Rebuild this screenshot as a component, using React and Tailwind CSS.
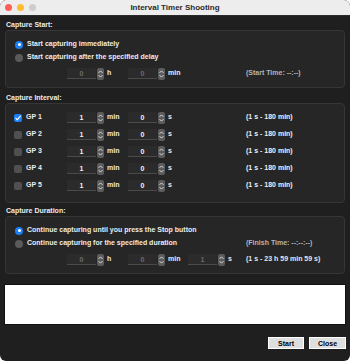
import React from 'react';

/* ── small controls ─────────────────────────────────────── */
const Stepper = () => (
  <svg width="7" height="12" viewBox="0 0 7 12" className="shrink-0">
    <rect x="0" y="0" width="7" height="12" rx="2" fill="#5c5c5c" />
    <path d="M1.8 4.6 L3.5 2.9 L5.2 4.6" fill="none" stroke="#e8e8e8" strokeWidth="0.9" strokeLinecap="round" strokeLinejoin="round" />
    <path d="M1.8 7.4 L3.5 9.1 L5.2 7.4" fill="none" stroke="#e8e8e8" strokeWidth="0.9" strokeLinecap="round" strokeLinejoin="round" />
  </svg>
);

const Radio = ({ on }) =>
  on ? (
    <span className="w-[8px] h-[8px] rounded-full bg-[#1b7ff5] flex items-center justify-center shrink-0">
      <span className="w-[3px] h-[3px] rounded-full bg-white" />
    </span>
  ) : (
    <span className="w-[8px] h-[8px] rounded-full bg-[#5a5a5a] shrink-0" />
  );

const Check = ({ on }) =>
  on ? (
    <span className="w-[8px] h-[8px] rounded-[2px] bg-[#1b7ff5] flex items-center justify-center shrink-0">
      <svg width="8" height="8" viewBox="0 0 8 8">
        <path d="M1.8 4.2 L3.3 5.8 L6.3 2.2" fill="none" stroke="white" strokeWidth="1.2" strokeLinecap="round" strokeLinejoin="round" />
      </svg>
    </span>
  ) : (
    <span className="w-[8px] h-[8px] rounded-[2px] bg-[#505050] shrink-0" />
  );

const NumField = ({ value, unit, disabled, w }) => (
  <div className={`flex items-center shrink-0 ${w}`}>
    <div
      className={`w-[29px] h-[11px] bg-[#2b2b2b] border-b border-[#4a4a4a] flex items-center justify-center leading-none ${
        disabled ? 'text-[#6b6b6b]' : 'text-[#f2f2f2]'
      }`}
    >
      {value}
    </div>
    <span className="ml-[1px]">
      <Stepper />
    </span>
    <span className="ml-[3px] text-[#ececec]">{unit}</span>
  </div>
);

const Label = ({ children, className = '' }) => (
  <div className={`h-[10px] leading-[10px] pl-[6px] text-[#ededed] ${className}`}>{children}</div>
);

const Box = ({ children, className = '' }) => (
  <div className={`mx-[5px] bg-[#262626] border border-[#363636] rounded-[4px] ${className}`}>{children}</div>
);

const intervals = ['GP 1', 'GP 2', 'GP 3', 'GP 4', 'GP 5'];

export default function App() {
  return (
    <div className="w-[350px] h-[362px] bg-white" style={{ fontFamily: '"Liberation Sans", Arial, sans-serif' }}>
      <div className="w-[350px] h-[361px] rounded-[6px] overflow-hidden bg-[#1f1f1f] flex flex-col text-[7px] font-bold">
        {/* ── Title bar ─────────────────────────────────── */}
        <div className="h-[16px] shrink-0 bg-[#ededed] border-b border-[#2a2a2a] flex items-center relative">
          <div className="flex items-center gap-[5px] pl-[5px]">
            <span className="w-[7px] h-[7px] rounded-full bg-[#fe5f57]" />
            <span className="w-[7px] h-[7px] rounded-full bg-[#febc2e]" />
            <span className="w-[7px] h-[7px] rounded-full bg-[#cdcdcd]" />
          </div>
          <div className="absolute inset-0 flex items-center justify-center text-[8px] font-bold text-[#2b2b2b]">
            Interval Timer Shooting
          </div>
        </div>

        {/* ── Capture Start ─────────────────────────────── */}
        <Label className="mt-[4px]">Capture Start:</Label>
        <Box className="pt-[7px] pb-[6px]">
          <div className="h-[13px] flex items-center pl-[9px] gap-[4px] text-[#ececec]">
            <Radio on />
            <span>Start capturing immediately</span>
          </div>
          <div className="h-[13px] flex items-center pl-[9px] gap-[4px] text-[#ececec]">
            <Radio />
            <span>Start capturing after the specified delay</span>
          </div>
          <div className="h-[15px] mt-[2px] flex items-center pl-[61px]">
            <NumField value="0" unit="h" disabled w="w-[61px]" />
            <NumField value="0" unit="min" disabled w="w-[118px]" />
            <span className="text-[#b5b5b5]">(Start Time: --:--)</span>
          </div>
        </Box>

        {/* ── Capture Interval ──────────────────────────── */}
        <Label className="mt-[5px]">Capture Interval:</Label>
        <Box className="pt-[5px] pb-[8px]">
          {intervals.map((gp, i) => (
            <div key={gp} className="h-[17px] flex items-center pl-[8px]">
              <div className="w-[53px] flex items-center gap-[4px] text-[#ececec]">
                <Check on={i === 0} />
                <span>{gp}</span>
              </div>
              <NumField value="1" unit="min" w="w-[61px]" />
              <NumField value="0" unit="s" w="w-[118px]" />
              <span className="text-[#f0f0f0]">(1 s - 180 min)</span>
            </div>
          ))}
        </Box>

        {/* ── Capture Duration ──────────────────────────── */}
        <Label className="mt-[3px]">Capture Duration:</Label>
        <Box className="pt-[7px] pb-[6px]">
          <div className="h-[13px] flex items-center pl-[9px] gap-[4px] text-[#ececec]">
            <Radio on />
            <span>Continue capturing until you press the Stop button</span>
          </div>
          <div className="h-[13px] flex items-center pl-[9px] text-[#ececec]">
            <div className="w-[231px] flex items-center gap-[4px]">
              <Radio />
              <span>Continue capturing for the specified duration</span>
            </div>
            <span className="text-[#b5b5b5]">(Finish Time: --:--:--)</span>
          </div>
          <div className="h-[15px] mt-[2px] flex items-center pl-[61px]">
            <NumField value="0" unit="h" disabled w="w-[61px]" />
            <NumField value="0" unit="min" disabled w="w-[60px]" />
            <NumField value="1" unit="s" disabled w="w-[58px]" />
            <span className="text-[#e6e6e6]">(1 s - 23 h 59 min 59 s)</span>
          </div>
        </Box>

        {/* ── Log area ──────────────────────────────────── */}
        <div className="mt-[10px] mx-[4px] h-[41px] bg-white border border-[#111]" />

        {/* ── Buttons ───────────────────────────────────── */}
        <div className="mt-[12px] flex justify-end gap-[5px] pr-[4px]">
          <button className="w-[36px] h-[12px] bg-[#dedede] border border-white text-black text-[7px] font-bold leading-none">
            Start
          </button>
          <button className="w-[37px] h-[12px] bg-[#dedede] border border-white text-black text-[7px] font-bold leading-none">
            Close
          </button>
        </div>
      </div>
    </div>
  );
}
